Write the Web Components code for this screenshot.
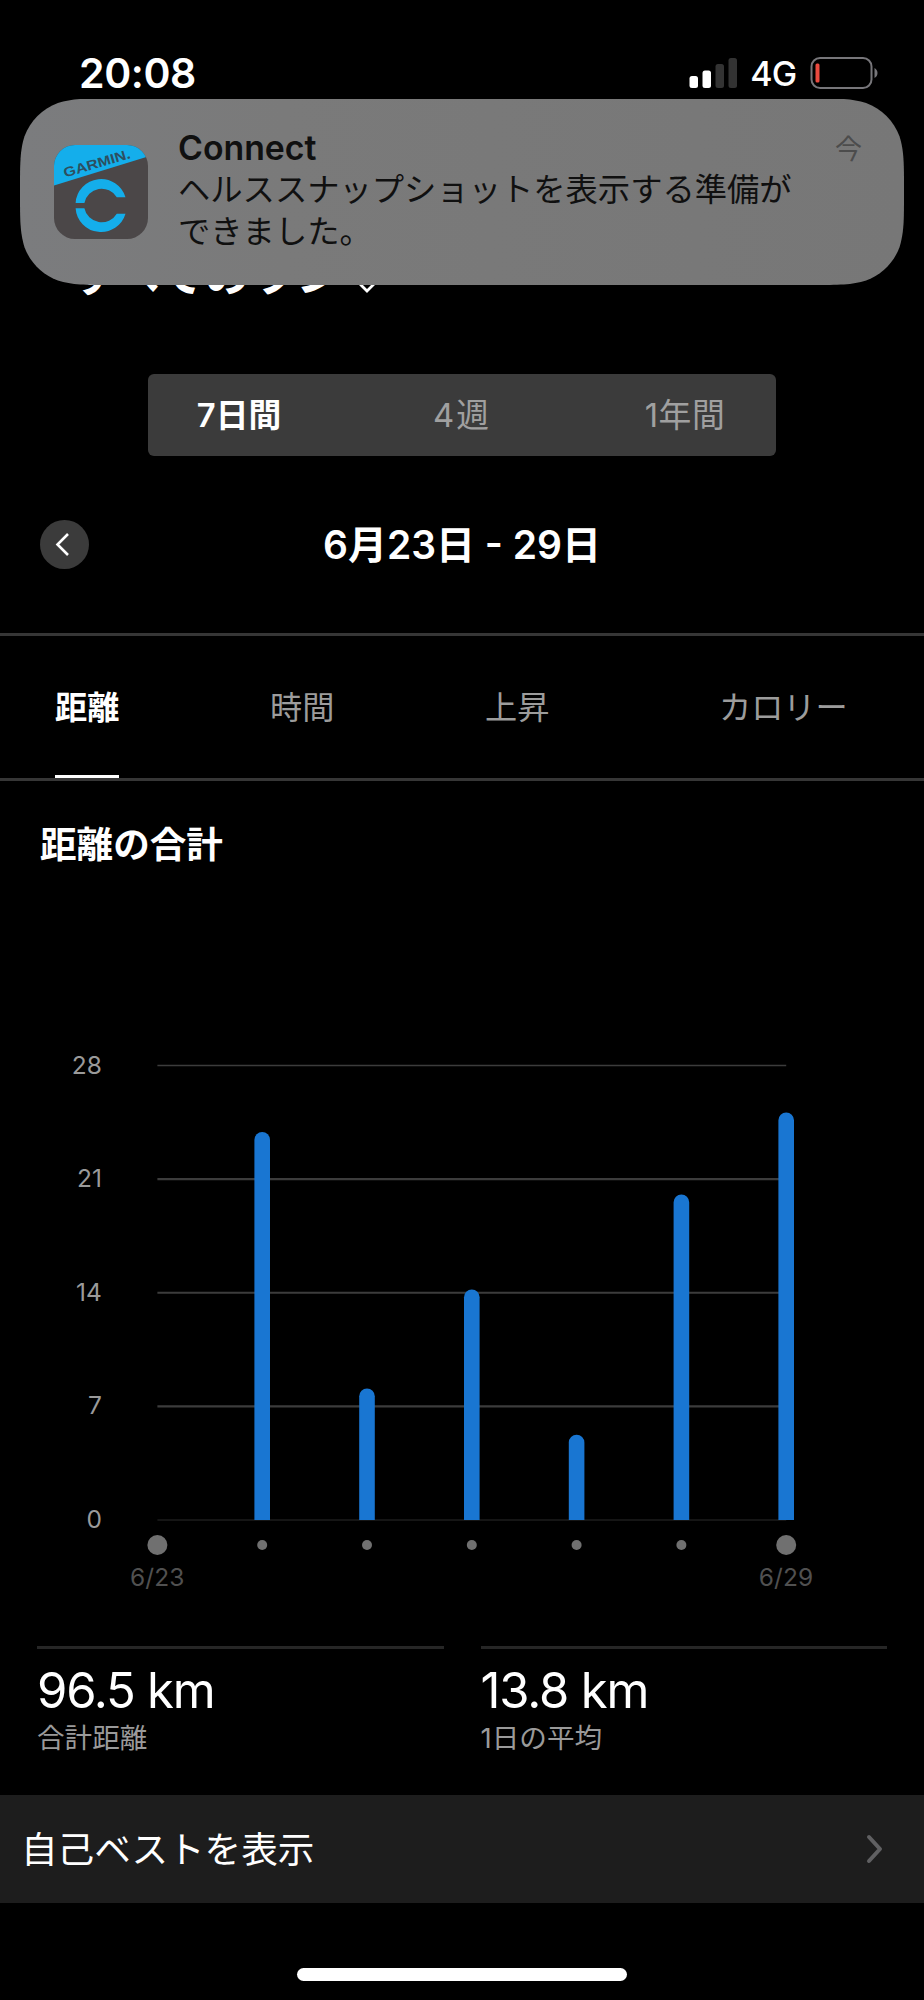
<!DOCTYPE html>
<html lang="ja">
<head>
<meta charset="utf-8">
<meta name="viewport" content="width=device-width, initial-scale=1">
<title>Connect</title>
<style>
    body {
        margin: 0;
        background: #000;
        color: #fff;
        font-family: Inter, "Noto Sans CJK JP", sans-serif;
    }

    .stats {
        display: grid;
        grid-template-columns: 1fr 1fr;
        gap: 37px;
        padding: 0 37px;
        height: 149px;
    }
</style>
</head>
<body>
<run-report>
    <status-bar slot="status" time="20:08" network="4G"></status-bar>
    <push-notification slot="banner" app="Connect" when="今">ヘルススナップショットを表示する準備が<br>できました。</push-notification>
    <report-title>すべてのラン</report-title>
    <period-switch>
        <span class="active">7日間</span>
        <span style="letter-spacing: 2px">4週</span>
        <span style="letter-spacing: 0.6px">1年間</span>
    </period-switch>
    <date-nav>6月23日 - 29日</date-nav>
    <metric-tabs>
        <span class="active">距離</span>
        <span>時間</span>
        <span>上昇</span>
        <span>カロリー</span>
    </metric-tabs>
    <distance-chart heading="距離の合計" values="0,23.9,8.1,14.2,5.25,20.05,25.1" max="28" from="6/23" to="6/29"></distance-chart>
    <div class="stats">
        <stat-tile label="合計距離">96.5 km</stat-tile>
        <stat-tile label="1日の平均">13.8 km</stat-tile>
    </div>
    <link-row>自己ベストを表示</link-row>
    <home-indicator></home-indicator>
</run-report>

<script>
class RunReport extends HTMLElement {
    constructor() {
        super();
        this.attachShadow({ mode: 'open' });
        this.shadowRoot.innerHTML = `
            <style>
                :host {
                    display: flex;
                    flex-direction: column;
                    position: relative;
                    width: 924px;
                    height: 2000px;
                    overflow: hidden;
                }

                /* The banner floats above the page content */
                .banner {
                    position: absolute;
                    top: 98.5px;
                    left: 20px;
                    right: 20px;
                }
            </style>
            <slot name="status"></slot>
            <slot></slot>
            <div class="banner"><slot name="banner"></slot></div>
        `;
    }
}

class StatusBar extends HTMLElement {
    connectedCallback() {
        this.attachShadow({ mode: 'open' });
        this.shadowRoot.innerHTML = `
            <style>
                :host {
                    display: flex;
                    justify-content: space-between;
                    align-items: center;
                    box-sizing: border-box;
                    height: 146px;
                    padding: 0 45px 0 79px;
                }

                .time {
                    font-size: 41px;
                    font-weight: 600;
                    line-height: 50px;
                    letter-spacing: -0.4px;
                }

                .right {
                    display: flex;
                    align-items: center;
                }

                .network {
                    margin: 2px 13.5px 0 12px;
                    font-size: 34px;
                    font-weight: 500;
                    line-height: 40px;
                    letter-spacing: -0.8px;
                }

                svg {
                    display: block;
                }
            </style>
            <span class="time">${this.getAttribute('time')}</span>
            <div class="right">
                <svg width="49" height="32" viewBox="0 0 49 32">
                    <rect x="0.5" y="19" width="8.5" height="12" rx="2.5" fill="#fff"/>
                    <rect x="13.5" y="13.5" width="8.5" height="17.5" rx="2.5" fill="#fff"/>
                    <rect x="26.5" y="7" width="8.5" height="24" rx="2.5" fill="#333"/>
                    <rect x="39.5" y="1" width="8.5" height="30" rx="2.5" fill="#333"/>
                </svg>
                <span class="network">${this.getAttribute('network')}</span>
                <svg width="69" height="32" viewBox="0 0 69 32">
                    <rect x="1.5" y="1" width="60" height="30" rx="8.5" fill="none" stroke="#77767a" stroke-width="2"/>
                    <rect x="5.5" y="6.5" width="4" height="19" rx="1.5" fill="#ea4a3f"/>
                    <path d="M64.5 11v10c2-1 3-3 3-5s-1-4-3-5z" fill="#77767a"/>
                </svg>
            </div>
        `;
    }
}

class PushNotification extends HTMLElement {
    connectedCallback() {
        this.attachShadow({ mode: 'open' });
        this.shadowRoot.innerHTML = `
            <style>
                :host {
                    display: flex;
                    box-sizing: border-box;
                    width: 884px;
                    height: 186.5px;
                    padding: 0 42px 0 34px;
                    clip-path: path("${this.outline(884, 186.5, 60)}");
                    background: linear-gradient(90deg, #7b7c7e, #7a7a7a 30%, #777);
                    color: #101010;
                }

                svg {
                    flex: none;
                    align-self: center;
                    margin-top: 1px;
                }

                .text {
                    flex: 1;
                    padding: 28px 0 0 30px;
                    font-size: 32.3px;
                    line-height: 42px;
                    white-space: nowrap;
                }

                .app {
                    font-size: 33.8px;
                    font-weight: 600;
                }

                .when {
                    padding-top: 30px;
                    font-size: 27px;
                    line-height: 42px;
                    color: #4c4c4c;
                }
            </style>
            <svg width="94" height="94" viewBox="0 0 94 94">
                <defs><clipPath id="tile"><rect width="94" height="94" rx="21"/></clipPath></defs>
                <g clip-path="url(#tile)">
                    <rect width="94" height="94" fill="#4b4748"/>
                    <path d="M0 0h94v11.5L0 40.5z" fill="#14aeeb"/>
                </g>
                <text transform="translate(11 32.5) rotate(-16.5)" textLength="69" lengthAdjust="spacingAndGlyphs" font-family="Liberation Sans" font-size="13.5" font-weight="700" fill="#2d4f60">GARMIN.</text>
                <path d="M21.6 58A25.5 25.5 0 0 1 71.5 52.3H62.8A17.6 17.6 0 0 0 30.4 58zM21.6 63.2A25.5 25.5 0 0 0 71.5 68.7H62.8A17.6 17.6 0 0 1 30.4 63.2z" fill="#14aeeb"/>
            </svg>
            <div class="text">
                <div class="app">${this.getAttribute('app')}</div>
                <slot></slot>
            </div>
            <span class="when">${this.getAttribute('when')}</span>
        `;
    }

    // Continuous corners: the curve eases into the straight edges
    outline(w, h, r) {
        const pts = [[1.528, 0], [1.088, 0], [0.868, 0], [0.631, 0.075], [0.373, 0.169], [0.169, 0.373], [0.075, 0.631], [0, 0.868], [0, 1.088], [0, 1.528]];
        const corner = (flipX, flipY, reverse) => {
            const p = pts.map(([x, y]) => [flipX ? w - x * r : x * r, flipY ? h - y * r : y * r].join(' '));
            if (reverse) p.reverse();
            return `${p[0]} C${p.slice(1, 4).join(' ')} C${p.slice(4, 7).join(' ')} C${p.slice(7).join(' ')}`;
        };
        return `M${corner(false, false, true)} L${corner(true, false, false)} L${corner(true, true, true)} L${corner(false, true, false)}Z`;
    }
}

class ReportTitle extends HTMLElement {
    connectedCallback() {
        this.attachShadow({ mode: 'open' });
        this.shadowRoot.innerHTML = `
            <style>
                :host {
                    display: flex;
                    align-items: flex-start;
                    gap: 11px;
                    height: 228px;
                    box-sizing: border-box;
                    padding-left: 71px;
                    font-size: 46px;
                    font-weight: 600;
                    line-height: 60px;
                }

                span {
                    margin-top: 98px;
                }

                svg {
                    margin-top: 127px;
                }
            </style>
            <span><slot></slot></span>
            <svg width="26" height="22" viewBox="0 0 26 22">
                <path d="M4 8l10 10L24 8" fill="none" stroke="#fff" stroke-width="2.8"/>
            </svg>
        `;
    }
}

class PeriodSwitch extends HTMLElement {
    connectedCallback() {
        this.attachShadow({ mode: 'open' });
        this.shadowRoot.innerHTML = `
            <style>
                :host {
                    display: grid;
                    grid-template-columns: 182px 1fr 182px;
                    align-items: center;
                    justify-items: center;
                    box-sizing: border-box;
                    width: 628px;
                    height: 82px;
                    margin: 0 auto;
                    border-radius: 6px;
                    background: #3b3b3b;
                    color: #a0a0a0;
                    font-size: 32.8px;
                    line-height: 40px;
                }

                ::slotted(.active) {
                    color: #fff;
                    font-weight: 600;
                }
            </style>
            <slot></slot>
        `;
    }
}

class DateNav extends HTMLElement {
    connectedCallback() {
        this.attachShadow({ mode: 'open' });
        this.shadowRoot.innerHTML = `
            <style>
                :host {
                    display: grid;
                    grid-template-columns: 49px 1fr 49px;
                    align-items: center;
                    justify-items: center;
                    height: 177px;
                    padding: 0 40px;
                    font-size: 39px;
                    font-weight: 600;
                    line-height: 48px;
                }
            </style>
            <svg width="49" height="49" viewBox="0 0 49 49">
                <circle cx="24.5" cy="24.5" r="24.5" fill="#3b3b3b"/>
                <path d="M28 14L17.5 24.5L28 35" fill="none" stroke="#fff" stroke-width="2.6"/>
            </svg>
            <span><slot></slot></span>
        `;
    }
}

class MetricTabs extends HTMLElement {
    connectedCallback() {
        this.attachShadow({ mode: 'open' });
        this.shadowRoot.innerHTML = `
            <style>
                :host {
                    display: grid;
                    grid-template-columns: 215px 215px 234px auto;
                    justify-items: start;
                    height: 142px;
                    padding-left: 55px;
                    border-top: 3px solid #363636;
                    border-bottom: 3px solid #363636;
                    color: #9c9c9c;
                    font-size: 32.2px;
                    line-height: 143px;
                }

                ::slotted(span) {
                    height: 142px;
                }

                ::slotted(.active) {
                    box-shadow: inset 0 -3px #fff;
                    color: #fff;
                    font-weight: 600;
                }
            </style>
            <slot></slot>
        `;
    }
}

class DistanceChart extends HTMLElement {
    connectedCallback() {
        this.attachShadow({ mode: 'open' });
        this.values = this.getAttribute('values').split(',').map(Number);
        this.max = Number(this.getAttribute('max'));
        this.left = 157.4;
        this.step = 104.8;
        this.base = 620;
        this.plotHeight = 454.5;
        this.render();
    }

    render() {
        this.shadowRoot.innerHTML = `
            <style>
                :host {
                    display: block;
                    height: 865px;
                }

                h2 {
                    height: 119px;
                    margin: 0 0 0 40px;
                    font-size: 36.6px;
                    font-weight: 600;
                    line-height: 129px;
                }

                svg {
                    display: block;
                }

                text {
                    font-size: 24.5px;
                    letter-spacing: 0.1px;
                }
            </style>
            <h2>${this.getAttribute('heading')}</h2>
            <svg width="924" height="746" viewBox="0 0 924 746">
                <g>${this.gridLines()}</g>
                <g fill="#1976d2">${this.bars()}</g>
                <g fill="#707070">${this.dots()}</g>
                <g fill="#505050" text-anchor="middle">
                    <text x="157.3" y="685.5">${this.getAttribute('from')}</text>
                    <text x="786" y="685.5">${this.getAttribute('to')}</text>
                </g>
            </svg>
        `;
    }

    y(value) {
        return this.base - value / this.max * this.plotHeight;
    }

    gridLines() {
        const right = this.left + this.step * (this.values.length - 1);
        let out = '';
        for (let tick = 0; tick <= this.max; tick += 7) {
            const y = this.y(tick);
            const edge = tick === 0 || tick === this.max;
            out += `<path d="M${this.left} ${y}H${right}" stroke="${tick === 0 ? '#1c1c1c' : '#3c3c3c'}" stroke-width="${edge ? 1.4 : 2.2}"/>
                <text x="102" y="${y + 8}" text-anchor="end" fill="#9a9a9a">${tick}</text>`;
        }
        return out;
    }

    bars() {
        return this.values.map((value, i) => {
            if (!value) return '';
            const x = this.left + this.step * i - 7.8;
            return `<path d="M${x} ${this.base}V${this.y(value) + 7.8}a7.8 7.8 0 0 1 15.6 0V${this.base}z"/>`;
        }).join('');
    }

    dots() {
        const last = this.values.length - 1;
        return this.values.map((_, i) => {
            const r = i === 0 || i === last ? 10 : 5;
            return `<circle cx="${this.left + this.step * i}" cy="645" r="${r}"/>`;
        }).join('');
    }
}

class StatTile extends HTMLElement {
    connectedCallback() {
        this.attachShadow({ mode: 'open' });
        this.shadowRoot.innerHTML = `
            <style>
                :host {
                    display: block;
                    border-top: 3px solid #262626;
                    white-space: nowrap;
                }

                .value {
                    padding-top: 14px;
                    font-size: 49px;
                    line-height: 56px;
                    letter-spacing: -1.2px;
                }

                .label {
                    padding-top: 1px;
                    color: #9a9a9a;
                    font-size: 27.6px;
                    line-height: 36px;
                }
            </style>
            <div class="value"><slot></slot></div>
            <div class="label">${this.getAttribute('label')}</div>
        `;
    }
}

class LinkRow extends HTMLElement {
    connectedCallback() {
        this.attachShadow({ mode: 'open' });
        this.shadowRoot.innerHTML = `
            <style>
                :host {
                    display: flex;
                    align-items: center;
                    justify-content: space-between;
                    height: 108px;
                    padding: 0 40px 0 21px;
                    background: #1d1d1d;
                    font-size: 36.6px;
                    line-height: 48px;
                }

                span {
                    margin-top: 2px;
                }
            </style>
            <span><slot></slot></span>
            <svg width="19" height="30" viewBox="0 0 19 30">
                <path d="M4 3L15 15L4 27" fill="none" stroke="#606062" stroke-width="4" stroke-linecap="round" stroke-linejoin="round"/>
            </svg>
        `;
    }
}

class HomeIndicator extends HTMLElement {
    connectedCallback() {
        this.attachShadow({ mode: 'open' });
        this.shadowRoot.innerHTML = `
            <style>
                :host {
                    display: block;
                    width: 330px;
                    height: 12.5px;
                    margin: 65px auto 0;
                    border-radius: 7px;
                    background: #fff;
                }
            </style>
        `;
    }
}

customElements.define('run-report', RunReport);
customElements.define('status-bar', StatusBar);
customElements.define('push-notification', PushNotification);
customElements.define('report-title', ReportTitle);
customElements.define('period-switch', PeriodSwitch);
customElements.define('date-nav', DateNav);
customElements.define('metric-tabs', MetricTabs);
customElements.define('distance-chart', DistanceChart);
customElements.define('stat-tile', StatTile);
customElements.define('link-row', LinkRow);
customElements.define('home-indicator', HomeIndicator);
</script>
</body>
</html>
